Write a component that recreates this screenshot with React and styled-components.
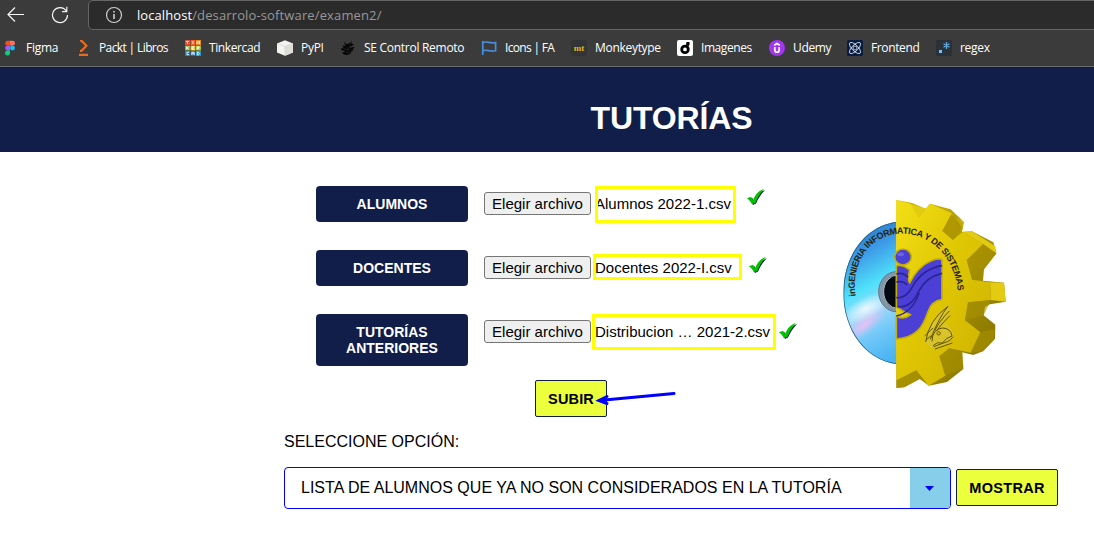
import React from "react";
import styled, { createGlobalStyle } from "styled-components";

const Global = createGlobalStyle`
  * { box-sizing: border-box; }
  body { margin: 0; background: #fff; color: #000; font-family: "Liberation Sans", Arial, sans-serif; overflow: hidden; }
`;

const Toolbar = styled.div`
  height: 30px;
  background: #3b3b3b;
  display: flex;
  align-items: flex-start;
  padding-left: 7px;
`;
const NavIcon = styled.svg`
  width: 18px;
  height: 18px;
  margin-top: 6px;
  margin-right: ${(p) => p.$gap}px;
  flex: none;
`;
const AddressBar = styled.div`
  flex: 1;
  height: 30px;
  margin-right: -8px;
  border: 1px solid #666;
  border-radius: 5px;
  background: #2b2b2b;
  display: flex;
  align-items: center;
  padding-left: 16px;
  font: 13px/18px "Open Sans", sans-serif;
  color: #989898;
  white-space: nowrap;
`;
const InfoIcon = styled.svg`
  width: 18px;
  height: 18px;
  margin-right: 14px;
`;
const Address = styled.span`
  letter-spacing: ${(p) => p.$track || 0}px;
`;
const Host = styled(Address)`
  color: #fff;
`;
const Bookmarks = styled.div`
  height: 37px;
  background: #3b3b3b;
  border-bottom: 1px solid #6b6b6b;
  display: flex;
  align-items: center;
  padding-left: 2px;
`;
const Bookmark = styled.div`
  width: ${(p) => p.$w}px;
  flex: none;
  display: flex;
  align-items: center;
  font: 12px/16px "Open Sans", sans-serif;
  letter-spacing: ${(p) => p.$track}px;
  color: #fff;
  white-space: nowrap;
  svg { width: 16px; height: 16px; margin-right: 8px; flex: none; }
`;

const Header = styled.header`
  height: 85px;
  background: #111e49;
  padding: 33px 0 0 249px;
  text-align: center;
`;
const Title = styled.h1`
  margin: 0;
  font-size: 32px;
  line-height: 37px;
  letter-spacing: -0.15px;
  font-weight: bold;
  color: #fff;
`;
const Main = styled.main`
  padding: 34px 36px 0 284px;
`;
const Upper = styled.section`
  display: flex;
  height: 236px;
`;
const Uploads = styled.form`
  width: 546px;
  padding-left: 32px;
`;
const Row = styled.div`
  display: flex;
  align-items: flex-start;
  height: ${(p) => p.$h}px;
  margin-bottom: ${(p) => p.$mb}px;
`;
const Label = styled.div`
  width: 152px;
  padding: 10px 20px;
  border-radius: 4px;
  background: #111e49;
  color: #fff;
  font-size: 14px;
  line-height: 16px;
  font-weight: bold;
  text-align: center;
`;
const Choose = styled.button`
  margin: 6px 0 0 16px;
  width: 107px;
  height: 23px;
  padding: 0;
  border: 1px solid #767676;
  border-radius: 3px;
  background: #efefef;
  color: #000;
  font: 15px/19px "Liberation Sans", Arial, sans-serif;
  white-space: nowrap;
`;
const FileName = styled.div`
  margin: ${(p) => p.$top}px 0 0 ${(p) => p.$left}px;
  width: ${(p) => p.$w}px;
  height: ${(p) => p.$h}px;
  border: 3px solid #ff0;
  padding-top: ${(p) => p.$pad}px;
  overflow: hidden;
  font-size: 15px;
  line-height: 17px;
  white-space: nowrap;
  span { margin-left: ${(p) => p.$indent}px; }
`;
const Check = styled.svg`
  width: 20px;
  height: 18px;
  margin: ${(p) => p.$top}px 0 0 ${(p) => p.$left}px;
`;
const Action = styled.button`
  width: ${(p) => p.$w}px;
  height: 37px;
  padding: 1px 0 0;
  border: 1px solid #111e49;
  border-radius: 2px;
  background: #ecff3d;
  color: #000;
  font: bold 14.5px/18px "Liberation Sans", Arial, sans-serif;
  letter-spacing: ${(p) => p.$track || 0}px;
`;
const SubmitLine = styled.div`
  position: relative;
  width: 72px;
  margin-left: 219px;
`;
const Arrow = styled.svg`
  position: absolute;
  left: 60px;
  top: 8px;
  width: 84px;
  height: 20px;
`;
const Logo = styled.svg`
  width: 190px;
  height: 205px;
  margin-top: 4px;
  flex: none;
`;
const Prompt = styled.div`
  margin-top: 11px;
  font-size: 16px;
  line-height: 18px;
`;
const Query = styled.div`
  display: flex;
  align-items: flex-start;
  gap: 5px;
  margin-top: 16px;
  button { margin-top: 2px; }
`;
const Select = styled.div`
  width: 667px;
  height: 42px;
  border: 1px solid #00f;
  border-radius: 4px;
  display: flex;
  overflow: hidden;
  font-size: 16px;
  line-height: 39px;
`;
const Value = styled.div`
  flex: 1;
  padding-left: 16px;
  letter-spacing: 0.01px;
  white-space: nowrap;
`;
const Toggle = styled.div`
  width: 40px;
  padding-right: 2px;
  background: #87ceeb;
  display: flex;
  align-items: center;
  justify-content: center;
  svg { width: 9px; height: 5px; }
`;

const icons = {
  figma: (
    <svg viewBox="0 0 16 16">
      <path d="M8 .8H5.6a2.4 2.4 0 0 0 0 4.8H8z" fill="#f24e1e" />
      <path d="M8 .8h2.6a2.4 2.4 0 0 1 0 4.8H8z" fill="#ff7262" />
      <path d="M8 5.6H5.6a2.4 2.4 0 0 0 0 4.8H8z" fill="#a259ff" />
      <circle cx="10.5" cy="8" r="2.4" fill="#1abcfe" />
      <path d="M8 10.4H5.6A2.5 2.5 0 1 0 8 13z" fill="#0acf83" />
    </svg>
  ),
  packt: (
    <svg viewBox="0 0 16 16" fill="none" stroke="#ec6a1f" strokeWidth="2.2">
      <path d="M5 .7h1.5L11.4 5.8 6.5 10.8H5M4 14.8h9" />
    </svg>
  ),
  tinkercad: (
    <svg viewBox="0 0 16 16">
      <path d="M0 0h5v5H0z" fill="#f1472f" /><path d="M5.5 0h5v5h-5z" fill="#ef6133" /><path d="M11 0h5v5h-5z" fill="#f38a20" />
      <path d="M0 5.5h5v5H0z" fill="#79b83c" /><path d="M5.5 5.5h5v5h-5z" fill="#e7bd20" /><path d="M11 5.5h5v5h-5z" fill="#a1be38" />
      <path d="M0 11h5v5H0z" fill="#1683c6" /><path d="M5.5 11h5v5h-5z" fill="#246eb6" /><path d="M11 11h5v5h-5z" fill="#159dd8" />
      <path d="M1 1.5h3M2.5 1.5V4M8 1v3M12 4V1.5l2.5 2.2V1M1.5 6.5v3M4 6.5l-2 1.5 2 1.5M9.5 6.7H7v2.8h2.5M7 8h2M12.2 9.7V6.8h2v1h-1.8l2 1.8M4 12.2H2v2.5h2M6.8 15v-2.8h2.4V15M7 13.8h2M12.3 12.2v2.6h1.2l1-1.2-1-1.4z" stroke="#fff" strokeWidth=".85" fill="none" />
    </svg>
  ),
  pypi: (
    <svg viewBox="0 0 16 16">
      <path d="M0 3.4L8 .3l8 3.1v9.2L8 15.8l-8-3.2z" fill="#f4f4f2" />
      <path d="M8 6.4v9.4l8-3.2V3.4z" fill="#ddddda" /><path d="M0 3.4l8 3 8-3M8 6.4v9.4" stroke="#c9c9c7" strokeWidth=".5" fill="none" />
    </svg>
  ),
  dragon: (
    <svg viewBox="0 0 16 16">
      <path d="M7.2.5C4 1 4.4 3.2 7 4l3.2-1L11.6.6l-.2 3 2.4.9-2.4 1.7-2.5.2 1 1.4 4.8-1.1-2.2 3 1 1-2.4.9-.2 1.9-3.3 1.6-3.1-.4-2.6-2L4 12l1-1-3.5-.8L1 8l2.5.5L2.7 5.8l3-.2L4.4 3.3C4.3 1.4 5.6.5 7.2.5z" fill="#080808" />
      <path d="M4 9l5 1-2-2.5M6 12.5l4-.3" stroke="#333" strokeWidth=".5" fill="none" />
    </svg>
  ),
  flag: (
    <svg viewBox="0 0 16 16" fill="none" stroke="#4c8ddb" strokeWidth="1.7">
      <path d="M1.8 1v14M2 2.5c4-1.8 7 1.4 12.6 0v8.2c-5.6 1.6-8.6-1.7-12.6 0" />
    </svg>
  ),
  monkey: (
    <svg viewBox="0 0 16 16">
      <rect width="16" height="16" rx="2.5" fill="#323437" />
      <text x="8" y="11.2" textAnchor="middle" letterSpacing="0" fontFamily="Liberation Serif" fontWeight="bold" fontSize="9" fill="#e2b714">mt</text>
    </svg>
  ),
  images: (
    <svg viewBox="0 0 16 16">
      <rect width="16" height="16" rx="2" fill="#fff" />
      <circle cx="8" cy="9.4" r="3.3" fill="none" stroke="#000" strokeWidth="2.8" />
      <path d="M9.5 2h3v2.8l-1.2 1.6-2.3-1.3z" fill="#000" />
    </svg>
  ),
  udemy: (
    <svg viewBox="0 0 16 16">
      <circle cx="8" cy="8" r="8" fill="#a435f0" />
      <path d="M5.2 5.3L8 3.6l2.8 1.7M5.8 7v3c0 3 4.4 3 4.4 0V7" fill="none" stroke="#fff" strokeWidth="1.7" />
    </svg>
  ),
  frontend: (
    <svg viewBox="0 0 16 16">
      <rect width="16" height="16" rx="1.5" fill="#071d40" />
      <g fill="none" stroke="#cbd4e2" strokeWidth=".9">
        <ellipse cx="8" cy="8" rx="7.3" ry="3" transform="rotate(45 8 8)" />
        <ellipse cx="8" cy="8" rx="7.3" ry="3" transform="rotate(-45 8 8)" />
        <circle cx="8" cy="8" r="2" />
      </g>
    </svg>
  ),
  regex: (
    <svg viewBox="0 0 16 16">
      <rect width="16" height="16" fill="#2a3138" />
      <path d="M3 10h3v3H3z" fill="#75bfff" />
      <path d="M10.5 2v7M7.5 3.8l6 3.4M13.5 3.8l-6 3.4" stroke="#63a9de" strokeWidth="1.3" />
    </svg>
  ),
};

const bookmarks = [
  ["Figma", "figma", 73, -0.25],
  ["Packt | Libros", "packt", 110, -0.62],
  ["Tinkercad", "tinkercad", 92, -0.4],
  ["PyPI", "pypi", 63, -0.3],
  ["SE Control Remoto", "dragon", 141, -0.28],
  ["Icons | FA", "flag", 90, -0.68],
  ["Monkeytype", "monkey", 106, -0.3],
  ["Imagenes", "images", 92, -0.42],
  ["Udemy", "udemy", 78, -0.35],
  ["Frontend", "frontend", 89, -0.38],
  ["regex", "regex", 80, -0.3],
];

const files = [
  { label: "ALUMNOS", file: "Alumnos 2022-1.csv", h: 36, mb: 28, box: { $top: 0, $left: 4, $w: 141, $h: 37, $pad: 6, $indent: -3 }, check: [2, 10] },
  { label: "DOCENTES", file: "Docentes 2022-I.csv", h: 36, mb: 28, box: { $top: 4, $left: 2, $w: 149, $h: 26, $pad: 2, $indent: -1 }, check: [6, 6] },
  { label: "TUTORÍAS ANTERIORES", file: "Distribucion … 2021-2.csv", h: 52, mb: 14, box: { $top: 0, $left: 1, $w: 184, $h: 36, $pad: 6, $indent: 0 }, check: [8, 2] },
];

function CheckMark({ top, left }) {
  return (
    <Check $top={top} $left={left} viewBox="0 0 20 18">
      <path d="M2.8 10.9l3.4-.8 2 2.8C10 8.5 13 4.5 19 1.9c-4 4-7 9-9 13.6l-3 1.4C6 15.1 5 12.9 2.8 10.9z" fill="#101c40" />
      <path d="M.8 10.2l4.2-1.5 2.1 3.3C9 6.9 12.2 2.7 17.9.9c-3.8 4-6.3 8.8-8.6 14l-3.5 1.2C4.8 13.7 3.4 11.9.8 10.2z" fill="#00c400" />
    </Check>
  );
}

function FacultyLogo() {
  return (
    <Logo viewBox="0 0 570 615">
      <defs>
        <linearGradient id="disc" x1="0.4" y1="0" x2="0.6" y2="1">
          <stop offset="0" stopColor="#2173c4" /><stop offset=".22" stopColor="#3d9be8" />
          <stop offset=".45" stopColor="#4fe0fa" /><stop offset=".62" stopColor="#a2dcfb" />
          <stop offset=".8" stopColor="#70c7f8" /><stop offset="1" stopColor="#4ab4f2" />
        </linearGradient>
        <radialGradient id="shine" cx=".5" cy=".5" r=".5">
          <stop offset="0" stopColor="#fff" stopOpacity=".8" /><stop offset="1" stopColor="#fff" stopOpacity="0" />
        </radialGradient>
        <radialGradient id="pink" cx=".5" cy=".5" r=".5">
          <stop offset="0" stopColor="#ecc2f3" /><stop offset="1" stopColor="#d8bdf5" stopOpacity="0" />
        </radialGradient>
        <linearGradient id="gold" x1="0" y1="0" x2="1" y2="1">
          <stop offset="0" stopColor="#f2df16" /><stop offset=".45" stopColor="#e0c704" /><stop offset="1" stopColor="#ccb000" />
        </linearGradient>
        <linearGradient id="edge" x1="0" y1="0" x2="1" y2="1">
          <stop offset="0" stopColor="#d7bf00" /><stop offset="1" stopColor="#796700" />
        </linearGradient>
        <clipPath id="half"><path d="M199 96C104 108 40 200 40 309C40 418 104 510 199 522z" /></clipPath>
        <path id="arc" d="M77 318C61 215 124 131 215 131C310 131 382 211 385 325" />
      </defs>
      <g clipPath="url(#half)">
        <path d="M35 90h164v440H35z" fill="url(#disc)" />
        <ellipse cx="104" cy="403" rx="84" ry="30" fill="url(#pink)" transform="rotate(-38 104 403)" />
        <ellipse cx="108" cy="355" rx="80" ry="34" fill="url(#shine)" transform="rotate(-28 108 355)" />
        <ellipse cx="199" cy="305" rx="53" ry="60" fill="#8197a9" stroke="#5f7689" strokeWidth="3" />
        <ellipse cx="203" cy="305" rx="42" ry="50" fill="#040810" stroke="#a6b8c8" strokeWidth="3" />
        <path d="M199 96C104 108 40 200 40 309C40 418 104 510 199 522" fill="none" stroke="#285d82" strokeWidth="5" />
      </g>
      <path d="M199 30L247 39L287 56L300 41L362 58L402 96L396 126L426 124L490 157L499 190L462 238L459 272L522 278L527 335L480 343L465 350L461 376L496 404L495 446L459 484L430 495L396 487L400 537L351 576L297 587L269 567L223 592L199 594z" fill="url(#edge)" />
      <path d="M199 30L242 42L267 82L300 41L365 70L337 123L369 150L399 125L459 162L410 211L426 269L480 277L483 330L414 337L405 391L451 427L422 488L358 475L328 499L346 557L296 587L259 541L199 571z" fill="url(#gold)" />
      <path d="M242 42L287 56L267 82zM300 41L402 96L396 112L365 70zM399 125L426 124L496 169L499 190L459 162zM480 277L522 278L527 335L483 330z" fill="#e2cb10" />
      <path d="M337 123L365 70L400 99L386 129L369 150zM410 211L459 162L499 191L462 238zM414 337L483 330L461 376L405 391zM422 488L451 427L496 416L490 453L459 484zM328 499L358 475L398 487L400 535L346 557zM199 571L259 541L269 567L223 592L199 594z" fill="#a89100" opacity=".6" />
      <g stroke="#c4b000" strokeWidth="5" strokeLinejoin="round">
        <path d="M199 227Q218 222 239 240Q232 270 239 279Q264 228 304 212Q320 204 336 208V329Q305 333 294 365C279 410 260 443 199 447V378Q220 391 242 374Q217 365 199 350z" fill="#4b3fd6" />
        <ellipse cx="219" cy="201" rx="25" ry="24" fill="#4b3fd6" />
      </g>
      <ellipse cx="212" cy="193" rx="10" ry="6" fill="#8d84ee" opacity=".5" />
      <path d="M199 378Q248 366 268 308" fill="none" stroke="#2a2596" strokeWidth="4" />
      <g fill="none" stroke="#2a2596" strokeWidth="5">
        <path d="M199 252Q220 246 234 262M199 276Q220 272 232 285M199 323Q228 326 246 292Q276 237 336 227M202 350Q244 354 266 304Q287 261 336 250" />
      </g>
      <path d="M285 455Q298 388 356 347V375L342 397Q371 416 369 439Q363 466 304 473z" fill="#d8c32b" />
      <g fill="none" stroke="#615300" strokeWidth="3">
        <path d="M287 456Q295 391 354 349Q327 382 301 448M358 363Q327 395 315 421M360 377Q332 404 320 423M306 454Q307 417 337 414Q362 414 366 438Q349 442 337 459Q321 454 309 467M311 470Q335 461 352 455Q364 450 369 440M315 477L367 459M284 438L309 414M288 450L305 436" />
        <circle cx="326" cy="430" r="5" />
      </g>
      <text fontFamily="Liberation Sans" fontWeight="bold" fontSize="27" fill="#26230d">
        <textPath href="#arc" textLength="530" lengthAdjust="spacing">inGENIERIA INFORMATICA Y DE SISTEMAS</textPath>
      </text>
    </Logo>
  );
}

export default function App() {
  return (
    <>
      <Global />
      <Toolbar>
        <NavIcon $gap={26} viewBox="0 0 18 18" fill="none" stroke="#f4f4f4" strokeWidth="1.2">
          <path d="M17 8.5H1M8 1.5l-7 7 7 7" />
        </NavIcon>
        <NavIcon $gap={19} viewBox="0 0 18 18" fill="none" stroke="#f4f4f4" strokeWidth="1.2">
          <path d="M15.3 5A7.5 7.5 0 1 0 16.5 9M15.8.8v4.8H11" />
        </NavIcon>
        <AddressBar>
          <InfoIcon viewBox="0 0 18 18" fill="none" stroke="#cecece" strokeWidth="1.2">
            <circle cx="9" cy="9" r="7.5" /><path d="M9 8v5M9 5v1.4" strokeWidth="1.6" />
          </InfoIcon>
          <Host $track={0.08}>localhost</Host>
          <Address $track={0.13}>/desarrolo-software/examen2/</Address>
        </AddressBar>
      </Toolbar>
      <Bookmarks>
        {bookmarks.map(([name, icon, w, track]) => (
          <Bookmark key={name} $w={w} $track={track}>{icons[icon]}{name}</Bookmark>
        ))}
      </Bookmarks>
      <Header><Title>TUTORÍAS</Title></Header>
      <Main>
        <Upper>
          <Uploads onSubmit={(e) => e.preventDefault()}>
            {files.map((f) => (
              <Row key={f.label} $h={f.h} $mb={f.mb}>
                <Label>{f.label}</Label>
                <Choose type="button">Elegir archivo</Choose>
                <FileName {...f.box}><span>{f.file}</span></FileName>
                <CheckMark top={f.check[0]} left={f.check[1]} />
              </Row>
            ))}
            <SubmitLine>
              <Action $w={72} $track={0.15}>SUBIR</Action>
              <Arrow viewBox="0 0 84 20" fill="none" stroke="#00f" strokeLinecap="round">
                <path d="M4 12.5L79 5.5" strokeWidth="3" />
                <path d="M12 8.5L4 12.5L12 15.5" strokeWidth="3" />
              </Arrow>
            </SubmitLine>
          </Uploads>
          <FacultyLogo />
        </Upper>
        <Prompt>SELECCIONE OPCIÓN:</Prompt>
        <Query>
          <Select>
            <Value>LISTA DE ALUMNOS QUE YA NO SON CONSIDERADOS EN LA TUTORÍA</Value>
            <Toggle><svg viewBox="0 0 9 5"><path d="M0 0h9L4.5 5z" fill="#00f" /></svg></Toggle>
          </Select>
          <Action $w={102} $track={0.3}>MOSTRAR</Action>
        </Query>
      </Main>
    </>
  );
}
